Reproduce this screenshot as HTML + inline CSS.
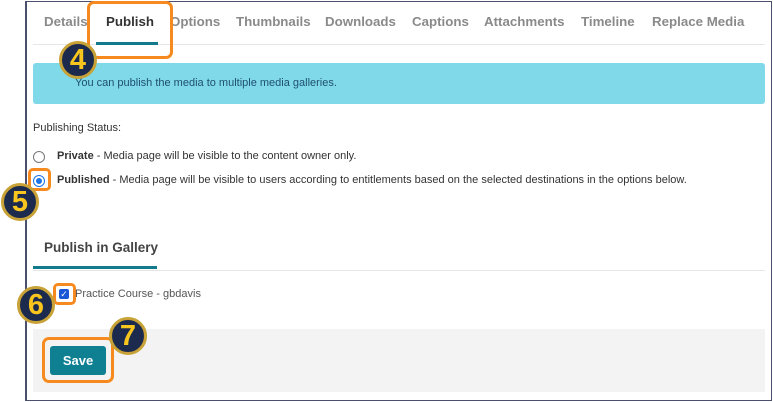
<!DOCTYPE html>
<html><head><style>
body{margin:0;width:773px;height:402px;background:#fff;font-family:"Liberation Sans",sans-serif;position:relative;overflow:hidden}
.a{position:absolute}
.frame{left:25px;top:1px;width:744px;height:398px;border:1px solid #4a4f6e;border-left-width:2px}
.tab{top:14px;font-size:13.3px;font-weight:bold;color:#8a8a8a;white-space:nowrap}
.badge{width:32px;height:32px;border-radius:50%;background:#1c2b4d;border:3px solid #c8a237;color:#f7c51e;font-weight:bold;font-size:29px;line-height:32px;text-align:center}
.ob{border:3px solid #f68a1e;border-radius:5px}
.t{font-size:11px;color:#333;white-space:nowrap}
</style></head><body>
<div class="a frame"></div>
<div class="a tab" style="left:44px">Details</div>
<div class="a tab" style="left:106px;color:#333">Publish</div>
<div class="a tab" style="left:170px">Options</div>
<div class="a tab" style="left:236px">Thumbnails</div>
<div class="a tab" style="left:325px">Downloads</div>
<div class="a tab" style="left:412px">Captions</div>
<div class="a tab" style="left:484px">Attachments</div>
<div class="a tab" style="left:581px">Timeline</div>
<div class="a tab" style="left:652px">Replace Media</div>
<div class="a" style="left:33px;top:44px;width:732px;height:1px;background:#e6e6e6"></div>
<div class="a" style="left:96px;top:42px;width:62px;height:3px;background:#137a8c"></div>
<div class="a ob" style="left:87px;top:1px;width:80px;height:52px;border-radius:7px"></div>
<div class="a" style="left:33px;top:63px;width:732px;height:41px;background:#7fd9e8;border-radius:3px"></div>
<div class="a t" style="left:75px;top:77px;color:#1f4f70">You can publish the media to multiple media galleries.</div>
<div class="a badge" style="left:59px;top:41px">4</div>
<div class="a t" style="left:33px;top:122px">Publishing Status:</div>
<div class="a" style="left:33px;top:151px;width:10px;height:10px;border:1px solid #777;border-radius:50%"></div>
<div class="a t" style="left:57px;top:150px"><b>Private</b> - Media page will be visible to the content owner only.</div>
<div class="a" style="left:33px;top:175px;width:10px;height:10px;border:1px solid #1a73e8;border-radius:50%;background:#fff"><div style="margin:2px;width:6px;height:6px;border-radius:50%;background:#1a73e8"></div></div>
<div class="a t" style="left:57px;top:174px"><b>Published</b> - Media page will be visible to users according to entitlements based on the selected destinations in the options below.</div>
<div class="a ob" style="left:28px;top:168px;width:17px;height:17px"></div>
<div class="a badge" style="left:1px;top:183px">5</div>
<div class="a" style="left:44px;top:240px;font-size:13.5px;font-weight:bold;color:#444">Publish in Gallery</div>
<div class="a" style="left:33px;top:270px;width:732px;height:1px;background:#e6e6e6"></div>
<div class="a" style="left:33px;top:266px;width:124px;height:3px;background:#137a8c"></div>
<div class="a" style="left:59px;top:289px;width:10px;height:10px;background:#1a56d6;border-radius:2px;color:#fff;font-size:9px;line-height:10px;text-align:center">✓</div>
<div class="a ob" style="left:53px;top:283px;width:17px;height:16px"></div>
<div class="a t" style="left:75px;top:288px;color:#555">Practice Course - gbdavis</div>
<div class="a badge" style="left:17px;top:286px">6</div>
<div class="a" style="left:33px;top:329px;width:732px;height:63px;background:#f3f3f3"></div>
<div class="a" style="left:50px;top:346px;width:56px;height:29px;background:#0f7f92;border-radius:3px;color:#fff;font-weight:bold;font-size:13px;line-height:29px;text-align:center">Save</div>
<div class="a ob" style="left:42px;top:337px;width:66px;height:40px;border-radius:7px"></div>
<div class="a badge" style="left:109px;top:317px">7</div>
</body></html>
